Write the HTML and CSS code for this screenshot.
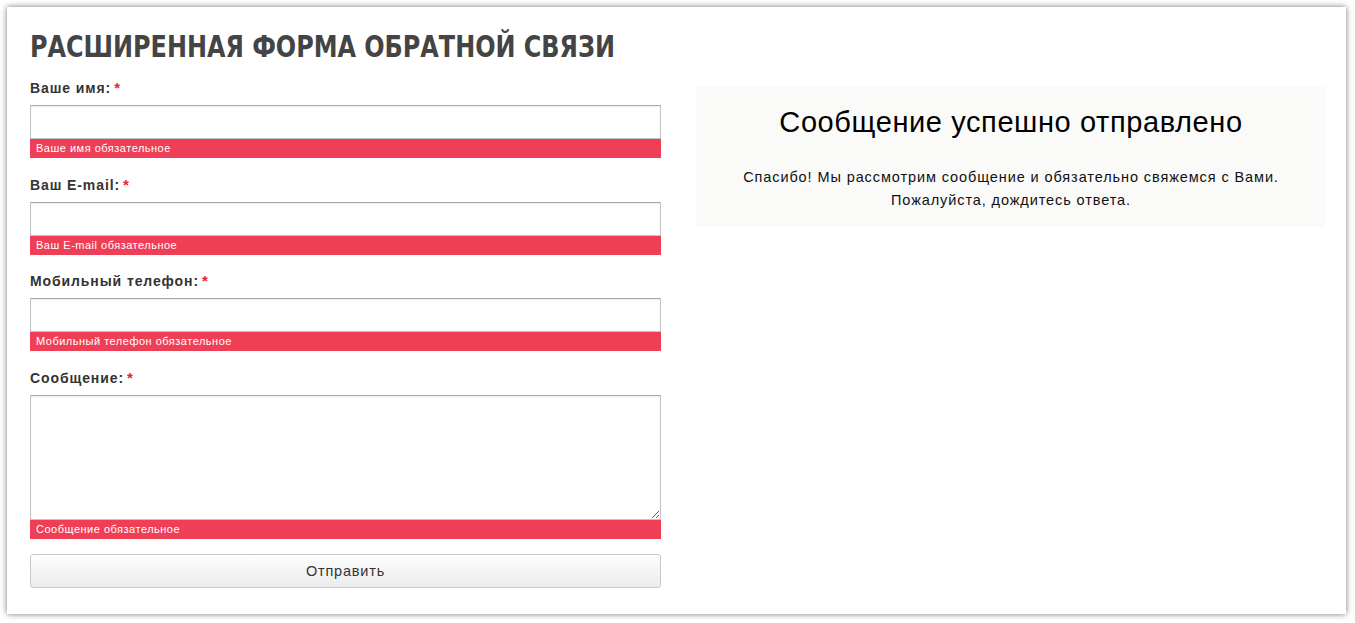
FILE: index.html
```html
<!DOCTYPE html>
<html lang="ru">
<head>
<meta charset="utf-8">
<title>Расширенная форма обратной связи</title>
<link rel="stylesheet" href="styles.css">
</head>
<body>
<div class="card">
  <h1 class="title"><span class="title-text">РАСШИРЕННАЯ ФОРМА ОБРАТНОЙ СВЯЗИ</span></h1>
  <div class="columns">
    <form class="form">
      <div class="field">
        <label class="label">Ваше имя:<span class="req">*</span></label>
        <input class="input" type="text">
        <div class="error">Ваше имя обязательное</div>
      </div>
      <div class="field">
        <label class="label">Ваш E-mail:<span class="req">*</span></label>
        <input class="input" type="text">
        <div class="error">Ваш E-mail обязательное</div>
      </div>
      <div class="field">
        <label class="label">Мобильный телефон:<span class="req">*</span></label>
        <input class="input" type="text">
        <div class="error">Мобильный телефон обязательное</div>
      </div>
      <div class="field">
        <label class="label">Сообщение:<span class="req">*</span></label>
        <textarea class="textarea"></textarea>
        <div class="error">Сообщение обязательное</div>
      </div>
      <button class="submit" type="button">Отправить</button>
    </form>
    <div class="success">
      <h2 class="success-title">Сообщение успешно отправлено</h2>
      <p class="success-text">Спасибо! Мы рассмотрим сообщение и обязательно свяжемся с Вами.<br>Пожалуйста, дождитесь ответа.</p>
    </div>
  </div>
</div>
</body>
</html>
```

FILE: styles.css
```css
html, body {
  margin: 0;
  padding: 0;
  background: #fff;
}
body {
  font-family: "Liberation Sans", Arial, sans-serif;
  color: #333;
}
.card {
  margin: 7px 9px 9px 7px;
  height: 607px;
  box-sizing: border-box;
  padding: 22px 20px 20px 23px;
  background: #fff;
  box-shadow: 0 0 6px rgba(0, 0, 0, 0.55);
}
.title {
  margin: 0 0 17px 0;
  font-family: "DejaVu Sans Condensed", "Liberation Sans", sans-serif;
  font-weight: bold;
  font-size: 31px;
  line-height: 34px;
  color: #444;
  white-space: nowrap;
}
.title-text {
  display: inline-block;
  transform: scaleX(0.857);
  transform-origin: left center;
}
.columns {
  display: grid;
  grid-template-columns: 631px 630px;
  column-gap: 35px;
  align-items: start;
}
.form {
  display: flex;
  flex-direction: column;
}
.field {
  display: flex;
  flex-direction: column;
  margin-bottom: 18.6px;
}
.label {
  font-size: 14px;
  font-weight: bold;
  line-height: 16px;
  color: #333;
  margin-bottom: 9px;
  letter-spacing: 0.9px;
}
.req {
  color: #e8232f;
  font-size: 15px;
  margin-left: 3px;
}
.input, .textarea {
  display: block;
  box-sizing: border-box;
  width: 100%;
  margin: 0;
  border: 1px solid #c4c4c4;
  border-top-color: #a8a8a8;
  box-shadow: inset 0 1px 2px rgba(0, 0, 0, 0.08);
  background: #fff;
  font-family: inherit;
  font-size: 14px;
}
.input {
  height: 34px;
}
.textarea {
  height: 125px;
  resize: vertical;
}
.error {
  background: #ef3f56;
  color: #fff;
  font-size: 11px;
  letter-spacing: 0.5px;
  line-height: 18px;
  height: 19px;
  padding-left: 6px;
}
.submit {
  margin-top: -3px;
  height: 34px;
  width: 100%;
  border: 1px solid #c8c8c8;
  border-radius: 3px;
  background: linear-gradient(#fdfdfd, #ececec);
  font-family: inherit;
  font-size: 14.5px;
  letter-spacing: 0.8px;
  color: #333;
}
.success {
  margin-top: 7px;
  background: #fafaf8;
  text-align: center;
  padding: 17px 20px 15px;
}
.success-title {
  margin: 0;
  font-weight: normal;
  font-size: 29px;
  letter-spacing: 0.6px;
  line-height: 36px;
  color: #000;
}
.success-text {
  margin: 26px 0 0 0;
  font-size: 14.5px;
  letter-spacing: 0.9px;
  line-height: 23px;
  color: #111;
}
```
